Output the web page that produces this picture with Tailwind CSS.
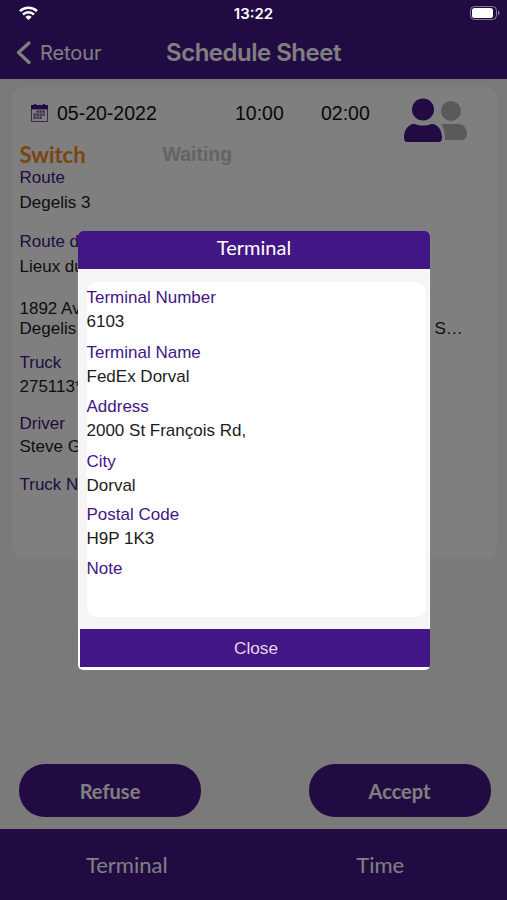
<!DOCTYPE html>
<html lang="en">
<head>
  <meta charset="UTF-8" />
  <meta name="viewport" content="width=device-width, initial-scale=1" />
  <title>Schedule Sheet</title>
  <script src="https://cdn.jsdelivr.net/npm/@tailwindcss/browser@4"></script>
</head>
<body class="bg-[#f5f5f5] overflow-hidden">

  <div class="relative flex flex-col w-[507px] h-[900px] overflow-hidden font-['Liberation_Sans',Arial,sans-serif] text-[17px] leading-5 whitespace-nowrap text-[#1c1c1c]">

    <!-- Navigation bar -->
    <header class="h-[79px] shrink-0 bg-[#431685] pt-[28px] text-[#fff] font-['Inter',sans-serif]">
      <div class="grid grid-cols-[166px_175px_166px] items-center h-[50px]">
        <div class="flex items-center pl-4">
          <svg class="w-[15px] h-6" viewBox="0 0 15 24" fill="none" stroke="currentColor" stroke-width="3.2" stroke-linecap="round" stroke-linejoin="round"><path d="M13 2 2.5 11.500 13 21.500" /></svg>
          <span class="ml-[9px] text-[20px] tracking-[-0.1px]">Retour</span>
        </div>
        <h1 class="text-[24px] font-semibold text-center tracking-[-0.5px]">Schedule Sheet</h1>
      </div>
    </header>

    <!-- Schedule card -->
    <main class="flex-1 px-3 pt-2">
      <section class="w-[485px] h-[472px] rounded-xl bg-white pl-[7.5px]">
        <div class="flex h-[54px] pt-[10px] text-[19.5px] text-[#111]">
          <svg class="ml-[11px] mt-[7px] w-[17px] h-[18px]" viewBox="0 0 17 18" fill="#431685">
            <path d="M0 1h3V0h2v1h7V0h2v1h3v4H0z" />
            <path d="M.5 5h16v12.5H.5z" fill="none" stroke="#431685" stroke-opacity=".75" />
            <path fill-opacity=".75" d="M5.500 6.500h2.300v2.300H5.500zM8.500 6.500h2.300v2.300H8.500zM11.500 6.500h2.300v2.300h-2.300zM2.500 9.500h2.300v2.300H2.500zM5.500 9.500h2.300v2.300H5.500zM8.500 9.500h2.300v2.300H8.500zM11.500 9.500h2.300v2.300h-2.300zM2.500 12.500h2.300v2.300H2.500zM5.500 12.500h2.300v2.300H5.500zM8.500 12.500h2.300v2.300H8.500z" />
          </svg>
          <span class="ml-[9.5px] mt-1.5 w-[178px]">05-20-2022</span>
          <span class="mt-1.5 w-[86px]">10:00</span>
          <span class="mt-1.5 w-[83px]">02:00</span>
          <svg class="w-[64px] h-[46px]" viewBox="0 0 64 46">
            <g fill="#b4b4b8">
              <circle cx="47" cy="14" r="10" />
              <path d="M37 27h17c6 0 9 5 9 10 0 3-2 6-5 6H41c0-7-1-12-4-16z" />
            </g>
            <g fill="#431685">
              <circle cx="19" cy="12.500" r="11" />
              <path d="M11 27c4 2 12 2 16 0 6-1 11 6 11 13 0 4-1 5-4 5H4c-3 0-4-1-4-5 0-7 5-14 11-13z" />
            </g>
          </svg>
        </div>
        <div class="flex h-[27px] items-center">
          <span class="w-[143px] text-[22px] font-bold text-[#f58a1e] font-['Lato',sans-serif]">Switch</span>
          <span class="-mt-px text-[19.5px] font-bold text-[#c9c9c9]">Waiting</span>
        </div>
        <div class="text-[#431685]">Route</div>
        <div class="mt-[5px]">Degelis 3</div>
        <div class="mt-[19px] text-[#431685]">Route de</div>
        <div class="mt-[5px]">Lieux du</div>
        <div class="mt-[22px]">1892 Ave</div>
        <div class="flex"><span class="w-[415px]">Degelis</span><span>S…</span></div>
        <div class="mt-[14px] text-[#431685]">Truck</div>
        <div class="mt-1">275113*</div>
        <div class="mt-[17px] text-[#431685]">Driver</div>
        <div class="mt-[3px]">Steve G</div>
        <div class="mt-[18px] text-[#431685]">Truck N</div>
      </section>
    </main>

    <!-- Action buttons -->
    <div class="flex justify-between pl-[19px] pr-[16.5px] pb-3 text-white text-[20px] font-bold font-['Lato',sans-serif]">
      <button class="w-[182px] h-[53px] rounded-[26px] bg-[#431685]">Refuse</button>
      <button class="w-[182px] h-[53px] rounded-[26px] bg-[#431685]">Accept</button>
    </div>

    <!-- Tab bar -->
    <nav class="grid grid-cols-2 h-[71px] shrink-0 bg-[#431685] text-white text-[22px] text-center leading-[71px] font-['Lato',sans-serif]">
      <a>Terminal</a>
      <a>Time</a>
    </nav>

    <!-- Backdrop and dialog -->
    <div class="absolute inset-0 bg-black/50 pl-[78px] pt-[231px]">
      <div class="flex flex-col w-[352px] h-[439px] rounded-[5px] overflow-hidden bg-white">
        <h2 class="h-[38px] bg-[#431685] text-white text-[20px] text-center leading-[33px] font-['Lato',sans-serif]">Terminal</h2>
        <div class="mt-px ml-px w-[350px] h-[359px] bg-[#f5f5f5] pt-3 pl-[7.5px]">
          <div class="w-[339px] h-[335px] rounded-[10px] bg-white pt-[6px]">
            <div class="text-[#431685]">Terminal Number</div>
            <div class="mt-1">6103</div>
            <div class="mt-[11px] text-[#431685]">Terminal Name</div>
            <div class="mt-1">FedEx Dorval</div>
            <div class="mt-[10px] text-[#431685]">Address</div>
            <div class="mt-1">2000 St François Rd,</div>
            <div class="mt-[11px] text-[#431685]">City</div>
            <div class="mt-1">Dorval</div>
            <div class="mt-[9px] text-[#431685]">Postal Code</div>
            <div class="mt-1">H9P 1K3</div>
            <div class="mt-[10px] text-[#431685]">Note</div>
          </div>
        </div>
        <button class="ml-[2px] h-[38px] bg-[#431685] pl-[2px] text-[#e4d8ee] text-[17.2px]">Close</button>
      </div>
    </div>

    <!-- Status bar -->
    <div class="absolute inset-x-0 top-0 h-7 text-white">
      <div class="grid grid-cols-3 items-center h-full px-[19px]">
        <svg class="w-[19px] h-[14px] -mt-0.5" viewBox="0 0 19 14" fill="none" stroke="currentColor" stroke-width="2.500">
          <path d="M1 5.200a12.300 12.300 0 0 1 17 0M4 8.500a8 8 0 0 1 11 0" />
          <path fill="currentColor" stroke="none" d="M6.300 10.900a4.700 4.700 0 0 1 6.400 0L9.500 14z" />
        </svg>
        <span class="text-[15px] font-semibold text-center font-['Inter',sans-serif]">13:22</span>
        <svg class="w-[31px] h-[14px] justify-self-end -mr-[13px] -mt-0.5" viewBox="0 0 31 14">
          <rect x=".5" y=".5" width="26" height="13" rx="4" fill="none" stroke="#fff" stroke-opacity=".45" />
          <rect x="2" y="2" width="21" height="10" rx="2.500" fill="#fff" />
          <path d="M28 4.500q3 2.500 0 5z" fill="#fff" fill-opacity=".5" />
        </svg>
      </div>
    </div>
  </div>

</body>
</html>
